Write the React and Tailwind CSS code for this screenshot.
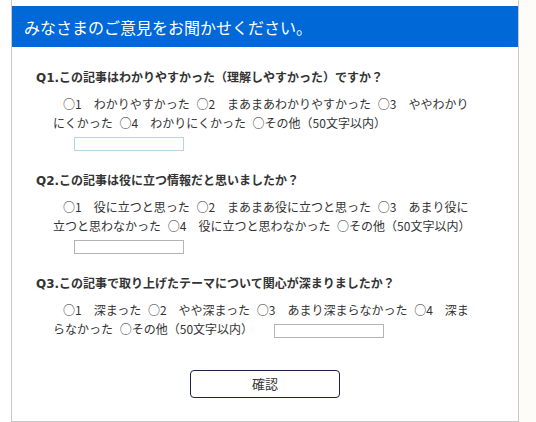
import React from 'react';

const questions = [
  {
    id: 'q1',
    title: 'Q1.この記事はわかりやすかった（理解しやすかった）ですか？',
    options: ['わかりやすかった', 'まあまあわかりやすかった', 'ややわかりにくかった', 'わかりにくかった'],
    focused: true,
  },
  {
    id: 'q2',
    title: 'Q2.この記事は役に立つ情報だと思いましたか？',
    options: ['役に立つと思った', 'まあまあ役に立つと思った', 'あまり役に立つと思わなかった', '役に立つと思わなかった'],
  },
  {
    id: 'q3',
    title: 'Q3.この記事で取り上げたテーマについて関心が深まりましたか？',
    options: ['深まった', 'やや深まった', 'あまり深まらなかった', '深まらなかった'],
  },
];

const Question = ({ q, first }) => (
  <div className={first ? 'mt-[22px]' : 'mt-[21px]'}>
    <h3 className="ml-[24px] text-[12px] leading-[18px] font-bold text-[#333]">{q.title}</h3>
    <p className="mt-[7px] ml-[41px] w-[420px] indent-[10px] font-['Noto_Sans_CJK_JP',sans-serif] text-[12px] leading-[19px] text-[#333] [word-spacing:4px]">
      {q.options.map((label, i) => (
        <React.Fragment key={i}>
          <span>{`○${i + 1}　${label}`}</span>{' '}
        </React.Fragment>
      ))}
      <span>○その他（50文字以内）</span>
      <input
        type="text"
        className={`ml-[21px] inline-block h-[14px] w-[110px] align-middle border bg-white ${
          q.focused ? 'border-[#b4d4e6]' : 'border-[#b4b4b4]'
        }`}
      />
    </p>
  </div>
);

export default function App() {
  return (
    <div className="flex h-[422px] w-[536px] overflow-hidden bg-white font-['DejaVu_Sans','Noto_Sans_CJK_JP',sans-serif]">
      <div className="ml-[11px] w-[508px] shrink-0 border-x border-b border-[#c9c9c9] pt-[6px]">
        {/* Header */}
        <div className="flex h-[41px] items-center bg-[#0069d7] pl-[12px]">
          <h2 className="font-['Noto_Sans_CJK_JP',sans-serif] text-[16px] text-white">
            みなさまのご意見をお聞かせください。
          </h2>
        </div>

        {questions.map((q, i) => (
          <Question key={q.id} q={q} first={i === 0} />
        ))}

        <div className="mt-[32px] flex justify-center pb-[23px]">
          <button className="h-[28px] w-[150px] rounded-[4px] border border-[#1b2140] bg-white font-['Noto_Sans_CJK_JP',sans-serif] text-[13px] text-[#333]">
            確認
          </button>
        </div>
      </div>
      <div className="flex-1 bg-[#fdfcf8]"></div>
    </div>
  );
}
